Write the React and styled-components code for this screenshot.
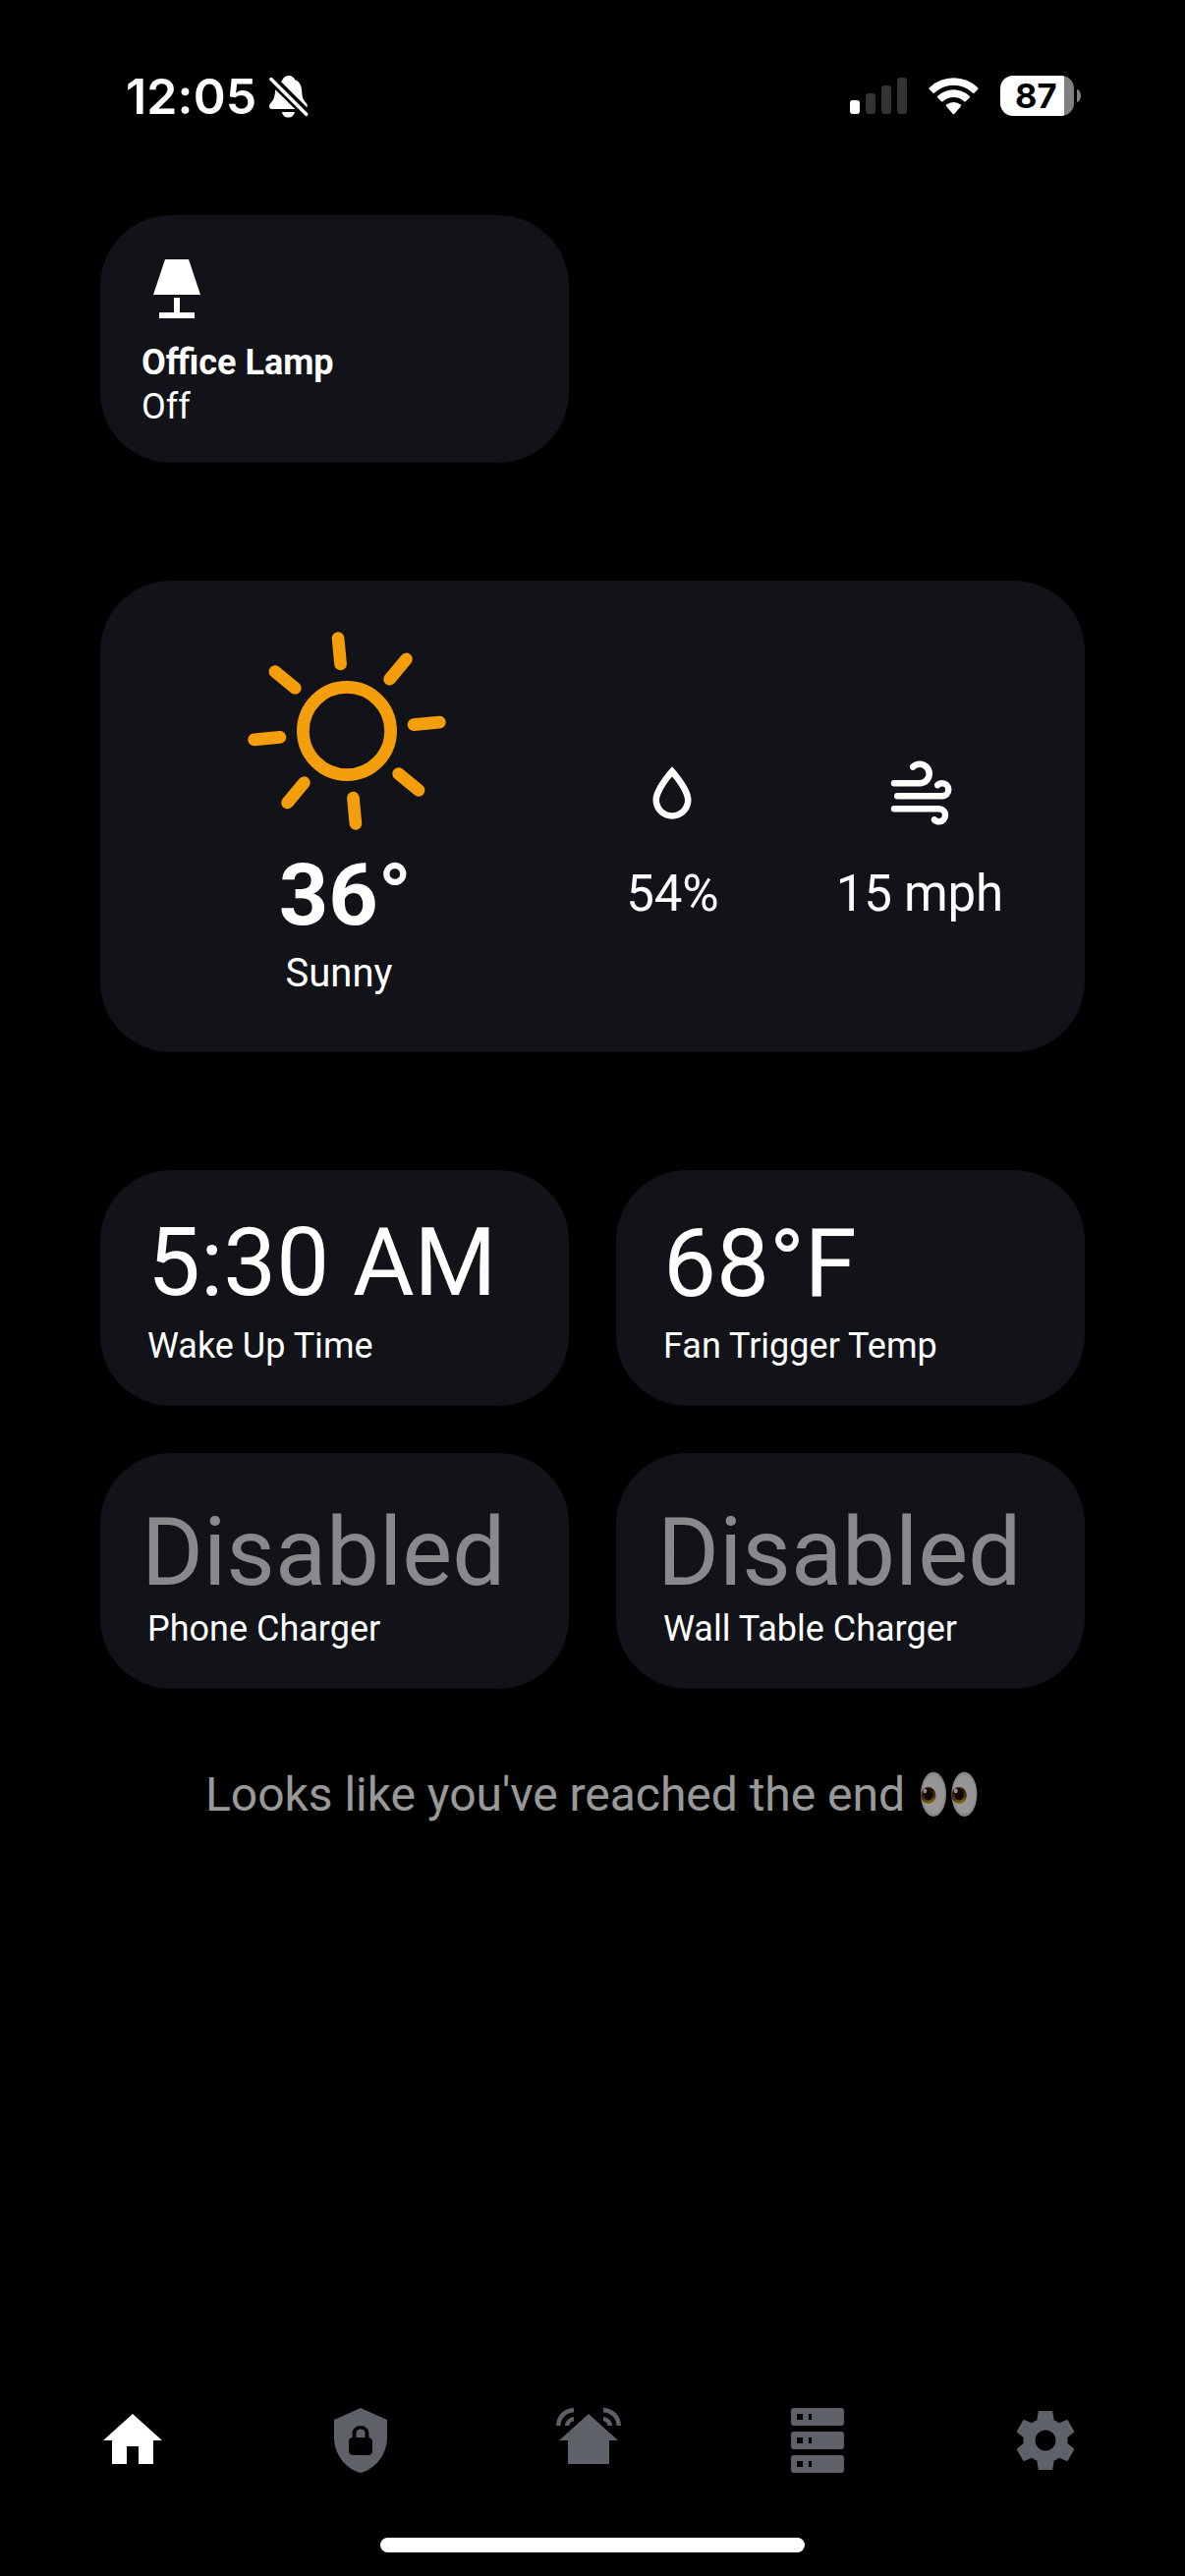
import React from 'react';
import styled, { createGlobalStyle } from 'styled-components';

const GlobalStyle = createGlobalStyle`
  *, *::before, *::after { box-sizing: border-box; }
  body {
    margin: 0;
    background: #000;
    color: #fff;
    font-family: Roboto, "Liberation Sans", sans-serif;
  }
`;

const Screen = styled.div`
  width: 1206px;
  height: 2622px;
  display: flex;
  flex-direction: column;
  background: #000;
  overflow: hidden;
`;

const StatusBar = styled.header`
  display: flex;
  justify-content: space-between;
  align-items: center;
  height: 195px;
  padding: 0 106px 0 128px;
`;

const StatusGroup = styled.div`
  display: flex;
  align-items: center;
`;

const Clock = styled.span`
  width: 146px;
  padding-top: 1px;
  font: 600 50px/60px Inter, sans-serif;
  letter-spacing: 0.15px;
  white-space: nowrap;
`;

const BellIcon = styled.svg`
  width: 40px;
  height: 43px;
  margin-top: 2px;
`;

const SignalIcon = styled.svg`
  width: 58px;
  height: 37px;
  margin-right: 22px;
`;

const WifiIcon = styled.svg`
  width: 51px;
  height: 38px;
  margin-right: 22px;
`;

const Battery = styled.div`
  display: flex;
  align-items: center;
  gap: 3px;
`;

const BatteryBody = styled.div`
  width: 75px;
  height: 41px;
  border-radius: 13px;
  background: linear-gradient(to right, #fff 65px, #808080 65px);
  color: #000;
  font: 650 34.5px/41px Inter, sans-serif;
  padding-left: 15px;
`;

const BatteryTip = styled.div`
  width: 4px;
  height: 13px;
  border-radius: 0 4px 4px 0 / 0 6.5px 6.5px 0;
  background: #808080;
`;

const Content = styled.main`
  flex: 1;
  display: flex;
  flex-direction: column;
  padding: 24px 102px 0;
`;

const Grid = styled.section`
  display: grid;
  grid-template-columns: 1fr 1fr;
  gap: 48px;
`;

const Card = styled.article`
  background: #121318;
  border-radius: 72px;
`;

const DeviceCard = styled(Card)`
  height: 252px;
  padding: 39px 42px 0;
`;

const Icon = styled.svg`
  display: block;
  width: ${(p) => p.$size}px;
  height: ${(p) => p.$size}px;
  fill: currentColor;
`;

const DeviceName = styled.h2`
  margin: 17px 0 0;
  font-size: 36px;
  line-height: 45px;
  font-weight: 700;
`;

const DeviceState = styled.p`
  margin: 0;
  font-size: 36px;
  line-height: 45px;
`;

const WeatherCard = styled(Card)`
  display: grid;
  grid-template-columns: 418px 244.6px 258.4px;
  height: 480px;
  margin: 120px 0;
  padding: 0 39px 0 42px;
`;

const Conditions = styled.div`
  display: flex;
  flex-direction: column;
  align-items: center;
  padding-top: 51px;
`;

const SunIcon = styled.svg`
  width: 204px;
  height: 204px;
  fill: none;
  stroke: #f59e0b;
  stroke-width: 12.7;
  stroke-linecap: round;
`;

const Temperature = styled.div`
  margin: 15px 3px 0 0;
  font-size: 88px;
  line-height: 100px;
  font-weight: 700;
`;

const Summary = styled.div`
  margin: 6px 16px 0 0;
  font-size: 40px;
  line-height: 48px;
`;

const Metric = styled.div`
  display: flex;
  flex-direction: column;
  align-items: center;
  gap: 34px;
  padding-top: 177px;
`;

const MetricValue = styled.span`
  font-size: 51px;
  line-height: 60px;
  letter-spacing: -0.2px;
  white-space: nowrap;
`;

const StatCard = styled(Card)`
  height: 240px;
  padding: ${(p) => p.$top}px 48px 0;
`;

const StatValue = styled.div`
  font-size: 96px;
  line-height: 96px;
  white-space: nowrap;
  margin-left: ${(p) => (p.$disabled ? -6 : 0)}px;
  opacity: ${(p) => (p.$disabled ? 0.5 : 1)};
`;

const StatLabel = styled.div`
  margin-top: ${(p) => p.$gap}px;
  font-size: 36px;
  line-height: 45px;
  white-space: nowrap;
`;

const EndNote = styled.p`
  display: flex;
  justify-content: center;
  align-items: center;
  gap: 15px;
  margin: 78px 1px 0 0;
  font-size: 48px;
  line-height: 60px;
  letter-spacing: -0.03px;
  white-space: nowrap;
  opacity: 0.6;
`;

const Eyes = styled.svg`
  width: 60px;
  height: 48px;
`;

const TabBar = styled.nav`
  display: flex;
  justify-content: space-between;
  padding: 0 106.1px 0 99px;
`;

const Tab = styled.a`
  color: ${(p) => (p.$active ? '#fff' : '#5f6169')};
`;

const HomeIndicator = styled.div`
  width: 432px;
  height: 15px;
  margin: 63px auto 24px;
  border-radius: 7.5px;
  background: #fff;
`;

const paths = {
  lamp: 'M8,2H16L20,14H4L8,2M11,15H13V20H18V22H6V20H11V15Z',
  water:
    'M12,3.77L11.25,4.61C11.25,4.61 9.97,6.06 8.68,7.94C7.39,9.82 6,12.07 6,14.23A6,6 0 0,0 12,20.23A6,6 0 0,0 18,14.23C18,12.07 16.61,9.82 15.32,7.94C14.03,6.06 12.75,4.61 12.75,4.61L12,3.77M12,6.9C12.44,7.42 12.84,7.85 13.68,9.07C14.89,10.83 16,13.07 16,14.23C16,16.45 14.22,18.23 12,18.23C9.78,18.23 8,16.45 8,14.23C8,13.07 9.11,10.83 10.32,9.07C11.16,7.85 11.56,7.43 12,6.9Z',
  wind:
    'M4,10A1,1 0 0,1 3,9A1,1 0 0,1 4,8H12A2,2 0 0,0 14,6A2,2 0 0,0 12,4C11.45,4 10.95,4.22 10.59,4.59C10.2,5 9.56,5 9.17,4.59C8.78,4.2 8.78,3.56 9.17,3.17C9.9,2.45 10.9,2 12,2A4,4 0 0,1 16,6A4,4 0 0,1 12,10H4M19,12A1,1 0 0,0 20,11A1,1 0 0,0 19,10C18.72,10 18.47,10.11 18.29,10.29C17.9,10.68 17.27,10.68 16.88,10.29C16.5,9.9 16.5,9.27 16.88,8.88C17.42,8.34 18.17,8 19,8A3,3 0 0,1 22,11A3,3 0 0,1 19,14H5A1,1 0 0,1 4,13A1,1 0 0,1 5,12H19M18,18H4A1,1 0 0,1 3,17A1,1 0 0,1 4,16H18A3,3 0 0,1 21,19A3,3 0 0,1 18,22C17.17,22 16.42,21.66 15.88,21.12C15.5,20.73 15.5,20.1 15.88,19.71C16.27,19.32 16.9,19.32 17.29,19.71C17.47,19.89 17.72,20 18,20A1,1 0 0,0 19,19A1,1 0 0,0 18,18Z',
};

const tabs = [
  { name: 'Home', active: true, d: 'M10,20V14H14V20H19V12H22L12,3L2,12H5V20H10Z' },
  {
    name: 'Security',
    d: 'M12,1L3,5V11C3,16.55 6.84,21.74 12,23C17.16,21.74 21,16.55 21,11V5L12,1M12,7C13.4,7 14.8,8.1 14.8,9.5V11C15.4,11 16,11.6 16,12.3V15.8C16,16.4 15.4,17 14.7,17H9.2C8.6,17 8,16.4 8,15.7V12.2C8,11.6 8.6,11 9.2,11V9.5C9.2,8.1 10.6,7 12,7M12,8.2C11.2,8.2 10.5,8.7 10.5,9.5V11H13.5V9.5C13.5,8.7 12.8,8.2 12,8.2Z',
  },
  {
    name: 'Automations',
    d: 'M12,3L2,12H5V20H19V12H22L12,3M7,1A6,6 0 0,0 1,7H2.5A4.5,4.5 0 0,1 7,2.5V1M7,4A3,3 0 0,0 4,7H5.5A1.5,1.5 0 0,1 7,5.5V4M17,1V2.5A4.5,4.5 0 0,1 21.5,7H23A6,6 0 0,0 17,1M17,4V5.5A1.5,1.5 0 0,1 18.5,7H20A3,3 0 0,0 17,4Z',
  },
  {
    name: 'Server',
    d: 'M4,1H20A1,1 0 0,1 21,2V6A1,1 0 0,1 20,7H4A1,1 0 0,1 3,6V2A1,1 0 0,1 4,1M4,9H20A1,1 0 0,1 21,10V14A1,1 0 0,1 20,15H4A1,1 0 0,1 3,14V10A1,1 0 0,1 4,9M4,17H20A1,1 0 0,1 21,18V22A1,1 0 0,1 20,23H4A1,1 0 0,1 3,22V18A1,1 0 0,1 4,17M9,5H10V3H9V5M9,13H10V11H9V13M9,21H10V19H9V21M5,3V5H7V3H5M5,11V13H7V11H5M5,19V21H7V19H5Z',
  },
  {
    name: 'Settings',
    d: 'M12,15.5A3.5,3.5 0 0,1 8.5,12A3.5,3.5 0 0,1 12,8.5A3.5,3.5 0 0,1 15.5,12A3.5,3.5 0 0,1 12,15.5M19.43,12.97C19.47,12.65 19.5,12.33 19.5,12C19.5,11.67 19.47,11.34 19.43,11L21.54,9.37C21.73,9.22 21.78,8.95 21.66,8.73L19.66,5.27C19.54,5.05 19.27,4.96 19.05,5.05L16.56,6.05C16.04,5.66 15.5,5.32 14.87,5.07L14.5,2.42C14.46,2.18 14.25,2 14,2H10C9.75,2 9.54,2.18 9.5,2.42L9.13,5.07C8.5,5.32 7.96,5.66 7.44,6.05L4.95,5.05C4.73,4.96 4.46,5.05 4.34,5.27L2.34,8.73C2.21,8.95 2.27,9.22 2.46,9.37L4.57,11C4.53,11.34 4.5,11.67 4.5,12C4.5,12.33 4.53,12.65 4.57,12.97L2.46,14.63C2.27,14.78 2.21,15.05 2.34,15.27L4.34,18.73C4.46,18.95 4.73,19.03 4.95,18.95L7.44,17.94C7.96,18.34 8.5,18.68 9.13,18.93L9.5,21.58C9.54,21.82 9.75,22 10,22H14C14.25,22 14.46,21.82 14.5,21.58L14.87,18.93C15.5,18.67 16.04,18.34 16.56,17.94L19.05,18.95C19.27,19.03 19.54,18.95 19.66,18.73L21.66,15.27C21.78,15.05 21.73,14.78 21.54,14.63L19.43,12.97Z',
  },
];

const stats = [
  { value: '5:30 AM', label: 'Wake Up Time', top: 46, gap: 15 },
  { value: '68°F', label: 'Fan Trigger Temp', top: 47, gap: 14 },
  { value: 'Disabled', label: 'Phone Charger', top: 53, gap: 8, disabled: true },
  { value: 'Disabled', label: 'Wall Table Charger', top: 53, gap: 8, disabled: true },
];

const MdiIcon = ({ d, size = 72 }) => (
  <Icon $size={size} viewBox="0 0 24 24" aria-hidden="true">
    <path d={d} />
  </Icon>
);

const BellOff = () => (
  <BellIcon viewBox="0 0 40 43" aria-hidden="true">
    <path
      fill="#fff"
      d="M13 5C14.2 2.2 16.2 0 19.7 0C23.2 0 25.2 2 26.2 4.2C31 6.2 33 10 33.2 16C33.4 22 34.5 24.5 37.3 27.5C38.6 28.9 39 30.2 38.6 31.4C38.4 32.4 37.6 33 36.6 32.6L11 7.2ZM6.2 14.2L26.3 34H2.8C.9 34 0 32.8 0 31.2C0 29.4 1 28.3 2.3 26.9C5 24 5.6 21 6.2 14.2ZM13 37H25.8C25.4 40.3 23 42.6 19.4 42.6C15.8 42.6 13.4 40.3 13 37Z"
    />
    <path d="M5.2 1.6L40 36.4" stroke="#000" strokeWidth="3.4" />
    <path d="M1.9 3.6L37.7 39.3" stroke="#fff" strokeWidth="3.5" strokeLinecap="round" />
  </BellIcon>
);

const Sun = () => (
  <SunIcon viewBox="-102 -102 204 204" aria-hidden="true">
    <circle r="44.6" />
    <g transform="rotate(-5.4)">
      {[0, 45, 90, 135, 180, 225, 270, 315].map((a) => (
        <path key={a} d="M68.4 0H94.8" transform={`rotate(${a})`} />
      ))}
    </g>
  </SunIcon>
);

const EyePair = () => (
  <Eyes viewBox="0 0 60 48" role="img" aria-label="eyes">
    <defs>
      <radialGradient id="eyeWhite" cx="0.5" cy="0.5" r="0.5">
        <stop offset="0.82" stopColor="#fafafa" />
        <stop offset="1" stopColor="#cfcfcf" />
      </radialGradient>
      <linearGradient id="iris" x1="0" y1="0" x2="0.25" y2="1">
        <stop offset="0.35" stopColor="#5a2a08" />
        <stop offset="0.75" stopColor="#8a5510" />
        <stop offset="1" stopColor="#d6a01c" />
      </linearGradient>
    </defs>
    {[0, 31.4].map((x) => (
      <g key={x} transform={`translate(${x} 0)`}>
        <ellipse cx="14" cy="23.2" rx="13" ry="22.7" fill="url(#eyeWhite)" />
        <ellipse cx="8.8" cy="24.4" rx="7.7" ry="8.5" fill="url(#iris)" />
        <ellipse cx="8.8" cy="23.6" rx="4.8" ry="5.9" fill="#1c0b02" />
        <ellipse cx="5.4" cy="20" rx="1.9" ry="2.3" fill="#f4f4f4" />
      </g>
    ))}
  </Eyes>
);

export default function App() {
  return (
    <Screen>
      <GlobalStyle />
      <StatusBar>
        <StatusGroup>
          <Clock>12:05</Clock>
          <BellOff />
        </StatusGroup>
        <StatusGroup>
          <SignalIcon viewBox="0 0 58 37" aria-hidden="true">
            <rect x="0" y="23" width="10" height="14" rx="3" fill="#fff" />
            <rect x="16" y="16" width="10" height="21" rx="3" fill="#333" />
            <rect x="32" y="8" width="10" height="29" rx="3" fill="#333" />
            <rect x="48" y="0" width="10" height="37" rx="3" fill="#333" />
          </SignalIcon>
          <WifiIcon viewBox="0 0 51 38" fill="#fff" aria-hidden="true">
            <path d="M0.9 10.2A35.5 35.5 0 0 1 50.1 10.2Q51 11.1 50.1 12L46.4 15.7Q45.7 16.3 44.9 15.6A28 28 0 0 0 6.1 15.6Q5.3 16.3 4.6 15.7L0.9 12Q0 11.1 0.9 10.2Z" />
            <path d="M9.3 18.8A23.5 23.5 0 0 1 41.7 18.8Q42.5 19.6 41.7 20.4L37.8 24.2Q37.1 24.8 36.4 24.2A16 16 0 0 0 14.6 24.2Q13.9 24.8 13.2 24.2L9.3 20.4Q8.5 19.6 9.3 18.8Z" />
            <path d="M18.1 27.6A11.5 11.5 0 0 1 32.9 27.6Q33.7 28.3 32.9 29.2L26.2 36.9Q25.5 37.7 24.8 36.9L18.1 29.2Q17.3 28.3 18.1 27.6Z" />
          </WifiIcon>
          <Battery>
            <BatteryBody>87</BatteryBody>
            <BatteryTip />
          </Battery>
        </StatusGroup>
      </StatusBar>

      <Content>
        <Grid>
          <DeviceCard>
            <MdiIcon d={paths.lamp} />
            <DeviceName>Office Lamp</DeviceName>
            <DeviceState>Off</DeviceState>
          </DeviceCard>
        </Grid>

        <WeatherCard>
          <Conditions>
            <Sun />
            <Temperature>36°</Temperature>
            <Summary>Sunny</Summary>
          </Conditions>
          <Metric>
            <MdiIcon d={paths.water} size={78} />
            <MetricValue>54%</MetricValue>
          </Metric>
          <Metric>
            <MdiIcon d={paths.wind} size={78} />
            <MetricValue>15 mph</MetricValue>
          </Metric>
        </WeatherCard>

        <Grid>
          {stats.map((s, i) => (
            <StatCard key={i} $top={s.top}>
              <StatValue $disabled={s.disabled}>{s.value}</StatValue>
              <StatLabel $gap={s.gap}>{s.label}</StatLabel>
            </StatCard>
          ))}
        </Grid>

        <EndNote>
          <span>Looks like you've reached the end</span>
          <EyePair />
        </EndNote>
      </Content>

      <TabBar>
        {tabs.map((t) => (
          <Tab key={t.name} $active={t.active} aria-label={t.name}>
            <MdiIcon d={t.d} />
          </Tab>
        ))}
      </TabBar>
      <HomeIndicator />
    </Screen>
  );
}
